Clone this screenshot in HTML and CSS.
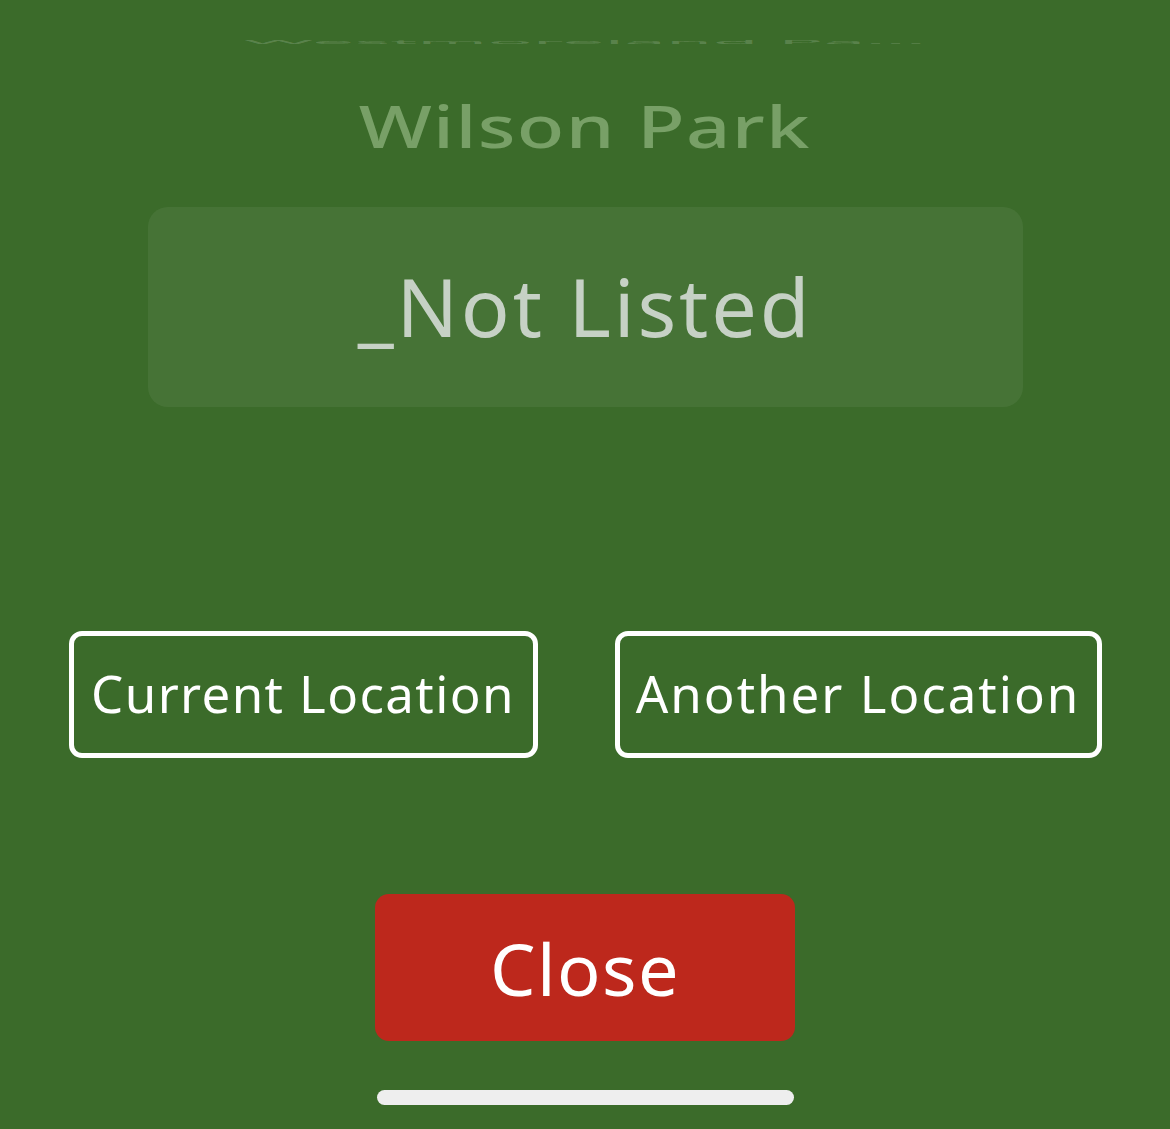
FILE: index.html
```html
<!DOCTYPE html>
<html lang="en">
<head>
<meta charset="utf-8">
<title>Location picker</title>
<link rel="stylesheet" href="styles.css">
</head>
<body>
<div class="screen">
  <div class="picker">
    <div class="wheel-sliver"><span class="sliver-text">Westmoreland Pa...</span></div>
    <div class="wheel-item"><span class="wheel-item-text">Wilson Park</span></div>
    <div class="wheel-selected"><span class="selected-text">_Not Listed</span></div>
  </div>
  <div class="actions">
    <button class="outline-btn btn-current">Current Location</button>
    <button class="outline-btn btn-another">Another Location</button>
  </div>
  <button class="close-btn">Close</button>
  <div class="home-indicator"></div>
</div>
</body>
</html>
```

FILE: styles.css
```css
html, body {
  margin: 0;
  padding: 0;
  background: #3b6b2a;
}

.screen {
  width: 1170px;
  height: 1129px;
  display: flex;
  flex-direction: column;
  align-items: center;
  font-family: "Noto Sans", "Open Sans", sans-serif;
  overflow: hidden;
}

.screen > * {
  flex-shrink: 0;
}

.picker {
  display: flex;
  flex-direction: column;
  align-items: center;
  width: 100%;
}

.wheel-sliver {
  margin-top: 38px;
  height: 8px;
  width: 680px;
  overflow: hidden;
  display: flex;
  justify-content: center;
  align-items: center;
}

.sliver-text {
  font-size: 60px;
  line-height: 60px;
  color: rgba(255, 255, 255, 0.18);
  transform: scale(1.25, 0.1);
  white-space: nowrap;
}

.wheel-item {
  margin-top: 40px;
  height: 80px;
  line-height: 80px;
  display: flex;
  justify-content: center;
}

.wheel-item-text {
  display: inline-block;
  font-size: 58px;
  font-weight: 500;
  color: #78a067;
  letter-spacing: 1px;
  white-space: nowrap;
  transform: scaleX(1.34);
}

.wheel-selected {
  margin-top: 41px;
  width: 875px;
  height: 200px;
  border-radius: 20px;
  background: rgba(255, 255, 255, 0.06);
  display: flex;
  align-items: center;
  justify-content: center;
}

.selected-text {
  font-size: 81px;
  line-height: 100px;
  color: #c6d1c5;
  white-space: nowrap;
  letter-spacing: 2.8px;
  padding-bottom: 2px;
}

.actions {
  margin-top: 224px;
  width: 1033px;
  display: flex;
  justify-content: space-between;
}

.outline-btn {
  height: 127px;
  box-sizing: border-box;
  border: 5px solid #ffffff;
  border-radius: 13px;
  background: transparent;
  color: #ffffff;
  font-family: "Noto Sans", "Open Sans", sans-serif;
  font-size: 51px;
  padding: 0 0 4px;
  white-space: nowrap;
}

.btn-current {
  width: 469px;
  letter-spacing: 1.4px;
}

.btn-another {
  width: 487px;
  letter-spacing: 2px;
}

.close-btn {
  margin-top: 136px;
  width: 420px;
  height: 147px;
  box-sizing: border-box;
  border: none;
  border-radius: 14px;
  background: #bd281c;
  color: #ffffff;
  font-family: "Noto Sans", "Open Sans", sans-serif;
  font-size: 72px;
  letter-spacing: 1.5px;
  padding: 0;
}

.home-indicator {
  margin-top: 49px;
  width: 417px;
  height: 15px;
  border-radius: 8px;
  background: #eeeeee;
}
```
